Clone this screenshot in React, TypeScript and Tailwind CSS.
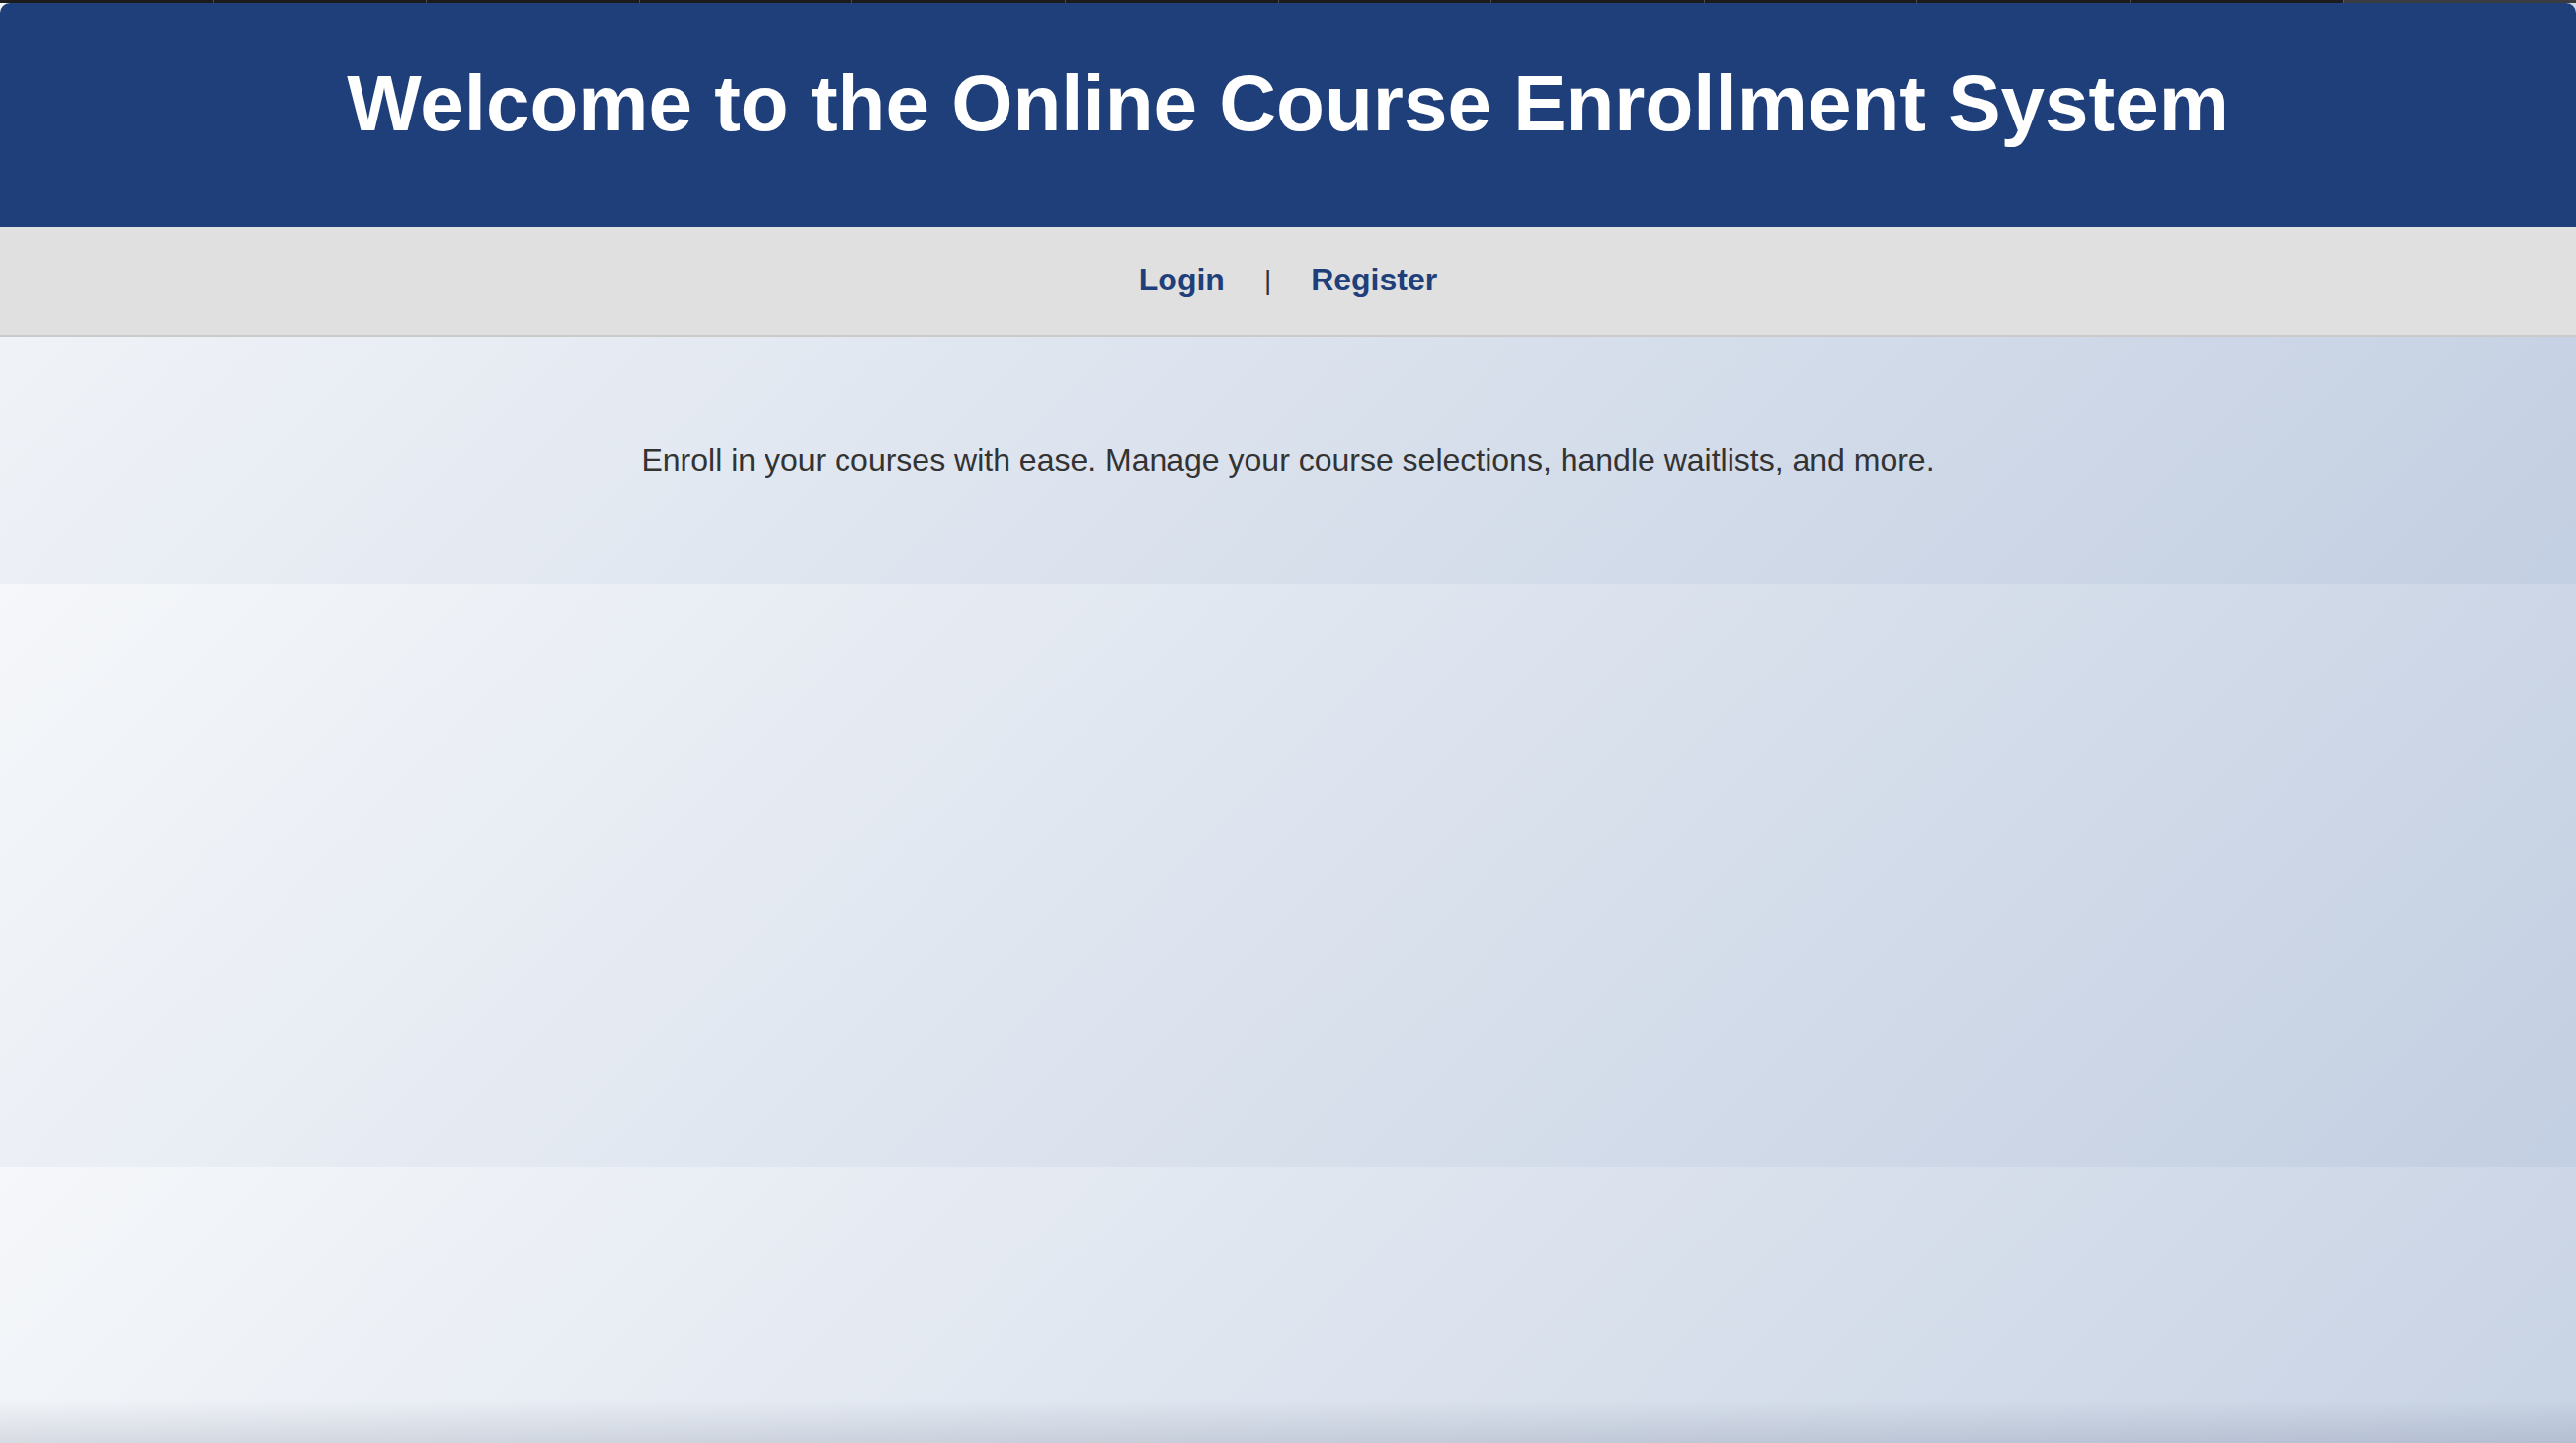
import React from 'react';

const TABS = Array.from({ length: 11 });

export default function App() {
  return (
    <div className="relative min-h-screen bg-[linear-gradient(135deg,#f5f7fa_0%,#c3cfe2_100%)] bg-[length:100%_591px] bg-repeat font-['Liberation_Sans',Arial,sans-serif] overflow-hidden">
      {/* window tab strip */}
      <div className="flex h-[3px] bg-[#1c1c1e]">
        {TABS.map((_, i) => (
          <div key={i} className="w-[215.6px] border-l border-[#4a4a4e] first:border-l-0" />
        ))}
        <div className="flex-1 bg-[#3b3b42] border-l border-[#5a5a60]" />
      </div>

      {/* Header */}
      <header className="bg-[#1f3f7a] rounded-t-[10px] pt-[56px] pb-[79px] text-center">
        <h1 className="text-white font-bold text-[80px] leading-[92px]">
          Welcome to the Online Course Enrollment System
        </h1>
      </header>

      {/* Nav */}
      <nav className="bg-[#e0e0e0] border-b-2 border-[#cacaca] pt-[35px] pb-[37px] flex justify-center items-center gap-[40px] text-[32px] leading-[37px]">
        <a href="#" className="text-[#1f3f7a] font-bold">Login</a>
        <span className="text-[#333333] text-[28px]">|</span>
        <a href="#" className="text-[#1f3f7a] font-bold">Register</a>
      </nav>

      {/* Main */}
      <main className="pt-[107px] pb-[106px] text-center">
        <p className="text-[#333333] text-[32px] leading-[37px]">
          Enroll in your courses with ease. Manage your course selections, handle waitlists, and more.
        </p>
      </main>

      {/* window bottom shade */}
      <div className="pointer-events-none absolute bottom-0 left-0 right-0 h-[44px] bg-gradient-to-t from-[rgba(40,50,80,0.13)] to-transparent" />
    </div>
  );
}
